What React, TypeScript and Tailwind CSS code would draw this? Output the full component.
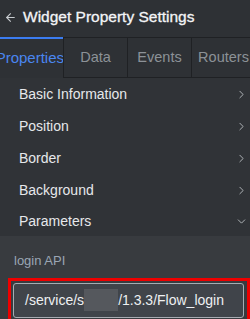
import { ChevronRight, ChevronDown, ArrowLeft } from 'lucide-react';

const sections = ['Basic Information', 'Position', 'Border', 'Background'];
const tabs = ['Data', 'Events', 'Routers'];

export default function App() {
  return (
    <div className="w-[250px] h-[319px] overflow-hidden bg-[#303337] text-white font-['Liberation_Sans',sans-serif]">
      {/* header */}
      <div className="h-[37px] flex items-center bg-[#2e3135] pb-[3px]">
        <ArrowLeft className="ml-[4px] w-[13px] h-[13px] text-[#c8ccd0]" strokeWidth={2} />
        <span className="ml-[6px] text-[15.5px] text-[#f4f5f7] [-webkit-text-stroke:0.3px_#f4f5f7]">
          Widget Property Settings
        </span>
      </div>

      {/* tabs */}
      <div className="flex h-[41px] bg-[#2e3135]">
        <div className="w-[64px] shrink-0 border-t-2 border-[#3b7cf0] flex items-center justify-end overflow-hidden">
          <span className="text-[15px] text-[#4a86f0] whitespace-nowrap">Properties</span>
        </div>
        {tabs.map((t) => (
          <div
            key={t}
            className="w-[65px] shrink-0 border border-[#1f2124] -ml-px first:ml-0 flex items-center justify-center"
          >
            <span className="text-[14.5px] text-[#8c9197] whitespace-nowrap">{t}</span>
          </div>
        ))}
      </div>

      {/* collapsible list */}
      <div className="bg-[#303337]">
        {sections.map((s) => (
          <div key={s} className="h-[32px] flex items-center justify-between pl-[19px] pr-[2px]">
            <span className="text-[14px] text-[#e6e8eb]">{s}</span>
            <ChevronRight className="w-[13px] h-[13px] text-[#c8ccd0]" strokeWidth={1.5} />
          </div>
        ))}
        <div className="h-[30px] flex items-center justify-between pl-[19px] pr-[2px]">
          <span className="text-[14px] text-[#e6e8eb]">Parameters</span>
          <ChevronDown className="w-[13px] h-[13px] text-[#c8ccd0]" strokeWidth={1.5} />
        </div>
      </div>

      {/* parameters body */}
      <div className="bg-[#383b3f] pt-[15px] h-[100px]">
        <div className="pl-[14px] text-[13px] text-[#9aa6b4]">login API</div>
        <div className="mt-[7px] ml-[8px] w-[242px] h-[45px] border-[3px] border-[#ee0000] p-[2px] pr-[3px]">
          <div className="h-full rounded-[3px] border border-[#a7acb2] bg-[#40444a] flex items-center pl-[11px] text-[14px] text-[#eef0f2]">
            <span>/service/s</span>
            <span className="w-[34px] h-[22px] bg-[#55585d]" />
            <span>/1.3.3/Flow_login</span>
          </div>
        </div>
      </div>
    </div>
  );
}
